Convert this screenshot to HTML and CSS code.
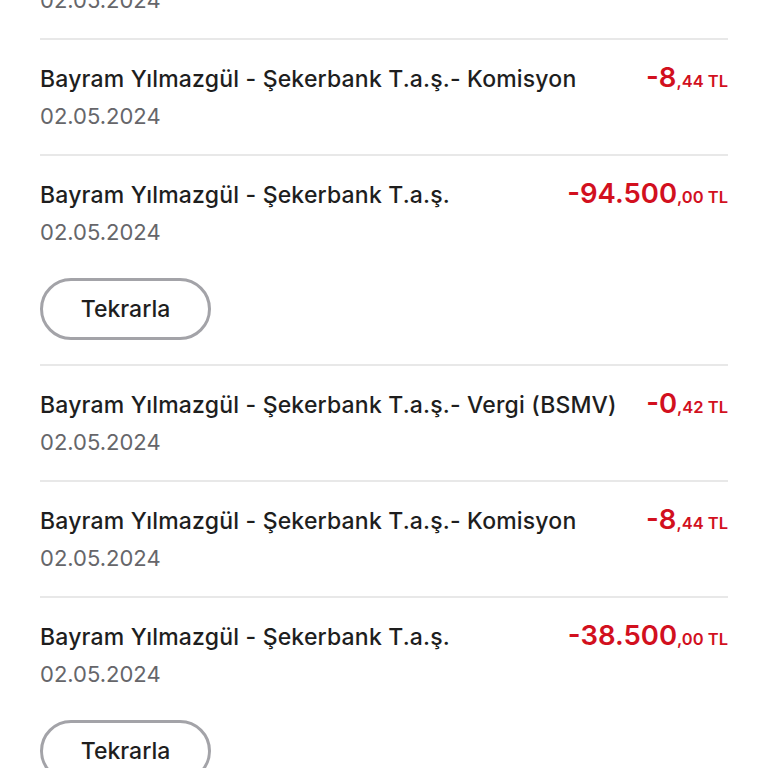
FILE: index.html
```html
<!DOCTYPE html>
<html lang="tr">
<head>
<meta charset="utf-8">
<link rel="stylesheet" href="styles.css">
</head>
<body>
<div class="list">
  <div class="row first">
    <div class="head"><span class="title">Bayram Yılmazgül - Şekerbank T.a.ş.- Vergi (BSMV)</span><span class="amount"><b>-0</b><small>,42 TL</small></span></div>
    <div class="date">02.05.2024</div>
  </div>
  <div class="row">
    <div class="head"><span class="title">Bayram Yılmazgül - Şekerbank T.a.ş.- Komisyon</span><span class="amount"><b>-8</b><small>,44 TL</small></span></div>
    <div class="date">02.05.2024</div>
  </div>
  <div class="row">
    <div class="head"><span class="title">Bayram Yılmazgül - Şekerbank T.a.ş.</span><span class="amount"><b>-94.500</b><small>,00 TL</small></span></div>
    <div class="date">02.05.2024</div>
    <button class="repeat">Tekrarla</button>
  </div>
  <div class="row">
    <div class="head"><span class="title">Bayram Yılmazgül - Şekerbank T.a.ş.- Vergi (BSMV)</span><span class="amount"><b>-0</b><small>,42 TL</small></span></div>
    <div class="date">02.05.2024</div>
  </div>
  <div class="row">
    <div class="head"><span class="title">Bayram Yılmazgül - Şekerbank T.a.ş.- Komisyon</span><span class="amount"><b>-8</b><small>,44 TL</small></span></div>
    <div class="date">02.05.2024</div>
  </div>
  <div class="row">
    <div class="head"><span class="title">Bayram Yılmazgül - Şekerbank T.a.ş.</span><span class="amount"><b>-38.500</b><small>,00 TL</small></span></div>
    <div class="date">02.05.2024</div>
    <button class="repeat">Tekrarla</button>
  </div>
</div>
</body>
</html>
```
FILE: styles.css
```css
html, body {
  margin: 0;
  padding: 0;
  background: #ffffff;
  overflow: hidden;
}
body {
  font-family: Inter, "Open Sans", sans-serif;
  color: #222222;
}
.list {
  margin-top: -76px;
  padding: 0 40px;
}
.row {
  display: flex;
  flex-direction: column;
  align-items: flex-start;
  padding: 23px 0 24px;
  border-top: 2px solid #e8e8e8;
}
.row.first {
  border-top: none;
}
.head {
  width: 100%;
  display: flex;
  justify-content: space-between;
  align-items: baseline;
  height: 28px;
  line-height: 28px;
}
.title {
  font-size: 23px;
  font-weight: 500;
  color: #1e1e1e;
  letter-spacing: 0.18px;
  white-space: nowrap;
}
.amount {
  color: #d2101e;
  white-space: nowrap;
}
.amount b {
  font-size: 27.5px;
  font-weight: 600;
}
.amount small {
  font-size: 16.5px;
  font-weight: 600;
}
.date {
  margin-top: 11px;
  font-size: 22px;
  line-height: 28px;
  font-weight: 400;
  color: #66666a;
}
.repeat {
  margin-top: 32px;
  width: 171px;
  height: 62px;
  border: 3px solid #a3a3a8;
  border-radius: 31px;
  background: #ffffff;
  font-family: inherit;
  font-size: 23px;
  font-weight: 500;
  color: #1e1e1e;
}
```
